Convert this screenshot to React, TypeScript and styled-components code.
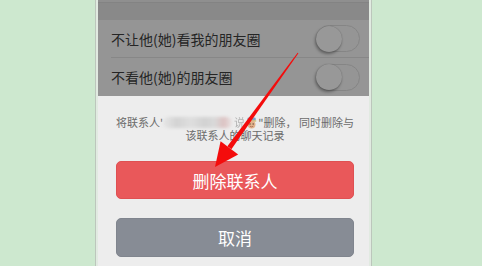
import React from "react";
import styled, { createGlobalStyle } from "styled-components";

const GlobalStyle = createGlobalStyle`
  html, body { margin: 0; padding: 0; background: #cde8cf; }
  body { font-family: "Noto Sans CJK SC", "Noto Sans", sans-serif; }
`;

const Page = styled.div`
  position: relative;
  width: 482px;
  height: 266px;
  overflow: hidden;
  display: flex;
  padding-left: 95px;
  box-sizing: border-box;
  background: #cde8cf;
`;

const Frame = styled.div`
  display: flex;
  height: 266px;
  padding: 0 2px;
  background: #e1eae1;
  border-left: 1px solid #bcc6bc;
  border-right: 1px solid #bcc6bc;
`;

const Screen = styled.div`
  width: 271px;
  display: flex;
  flex-direction: column;
  background: #ededed;
  overflow: hidden;
`;

const TopBand = styled.div`
  flex-shrink: 0;
  height: 2px;
  background: #8f8f8f;
  border-bottom: 1px solid #838383;
`;

const Gap = styled.div`
  flex-shrink: 0;
  height: 17px;
  background: #898989;
`;

const Rows = styled.div`
  flex-shrink: 0;
  background: #959595;
`;

const Row = styled.div`
  height: 38px;
  padding-left: 13px;
  display: flex;
`;

const RowInner = styled.div<{ $divider?: boolean }>`
  flex: 1;
  display: flex;
  align-items: center;
  justify-content: space-between;
  padding-right: 9px;
  box-sizing: border-box;
  border-bottom: ${(p) => (p.$divider ? "1px solid #878787" : "none")};
`;

const RowLabel = styled.span`
  font-size: 14px;
  color: #252525;
`;

const Track = styled.div`
  width: 44px;
  height: 27px;
  box-sizing: border-box;
  border: 1px solid #858585;
  border-radius: 14px;
  background: #959595;
  display: flex;
  align-items: center;
`;

const Knob = styled.div`
  width: 26px;
  height: 26px;
  margin-left: -1px;
  border-radius: 50%;
  background: #989898;
  box-shadow: -1px 2px 3px rgba(0, 0, 0, 0.35), 0 0 1px rgba(0, 0, 0, 0.3);
`;

const Sheet = styled.div`
  flex: 1 1 auto;
  min-height: 0;
  display: flex;
  flex-direction: column;
  padding: 20px 15px 0 18px;
  background: #ededed;
`;

const Message = styled.div`
  flex-shrink: 0;
  font-size: 11px;
  line-height: 13px;
  color: #6b6b6b;
  text-align: center;
  white-space: nowrap;
  margin-bottom: 19px;
`;

const Line = styled.div`
  height: 13px;
  display: flex;
  justify-content: center;
  align-items: center;
`;

const BlurName = styled.span`
  display: inline-block;
  width: 74px;
  height: 11px;
  margin: 0 2px 0 0;
  border-radius: 6px;
  background: linear-gradient(
    90deg,
    #e6e6e6 0%,
    #d3d3d3 20%,
    #dedede 40%,
    #d2d2d2 60%,
    #d9d9d9 75%,
    #dcc2c2 88%,
    #e8e2e2 100%
  );
  filter: blur(1.5px);
`;

const Faded = styled.span`
  opacity: 0.45;
`;

const Button = styled.div<{ $variant: "danger" | "cancel" }>`
  flex-shrink: 0;
  height: ${(p) => (p.$variant === "danger" ? "38px" : "39px")};
  box-sizing: border-box;
  border-radius: 5px;
  display: flex;
  align-items: center;
  justify-content: center;
  font-size: 17px;
  color: #fff;
  background: ${(p) => (p.$variant === "danger" ? "#e9585a" : "#878c95")};
  border: 1px solid ${(p) => (p.$variant === "danger" ? "#df5052" : "#80858e")};
  margin-bottom: 19px;
`;

const ArrowLayer = styled.svg`
  position: absolute;
  left: 0;
  top: 0;
  pointer-events: none;
`;

const Emoji = () => (
  <svg width="12" height="12" viewBox="0 0 12 13" style={{ margin: "0 1px" }}>
    <rect x="1.5" y="0.5" width="9" height="4" rx="1.5" fill="#7fa6cc" />
    <rect x="1" y="3.5" width="10" height="1.6" fill="#d8c47a" />
    <circle cx="6" cy="8.2" r="4.2" fill="#e2b38c" />
    <circle cx="4.3" cy="7.6" r="0.7" fill="#5a3a2a" />
    <circle cx="7.7" cy="7.6" r="0.7" fill="#5a3a2a" />
    <path d="M4.2 10 Q6 11.4 7.8 10" stroke="#a0604a" strokeWidth="0.8" fill="none" />
  </svg>
);

export default function App() {
  return (
    <>
      <GlobalStyle />
      <Page>
        <Frame>
          <Screen>
            <TopBand />
            <Gap />
            <Rows>
              <Row>
                <RowInner $divider>
                  <RowLabel>不让他(她)看我的朋友圈</RowLabel>
                  <Track>
                    <Knob />
                  </Track>
                </RowInner>
              </Row>
              <Row>
                <RowInner>
                  <RowLabel>不看他(她)的朋友圈</RowLabel>
                  <Track>
                    <Knob />
                  </Track>
                </RowInner>
              </Row>
            </Rows>
            <Sheet>
              <Message>
                <Line>
                  将联系人'<BlurName />
                  <Faded>说</Faded>
                  <Emoji />"删除， 同时删除与
                </Line>
                <Line>该联系人的聊天记录</Line>
              </Message>
              <Button $variant="danger">删除联系人</Button>
              <Button $variant="cancel">取消</Button>
            </Sheet>
          </Screen>
        </Frame>
        <ArrowLayer width="482" height="266" viewBox="0 0 482 266">
          <polygon
            points="298.4,53.3 297.6,52.7 227.4,146.3 231.4,149.3"
            fill="#f40c0c"
          />
          <polygon points="215,167 238.2,154.4 220.6,141.2" fill="#f40c0c" />
        </ArrowLayer>
      </Page>
    </>
  );
}
